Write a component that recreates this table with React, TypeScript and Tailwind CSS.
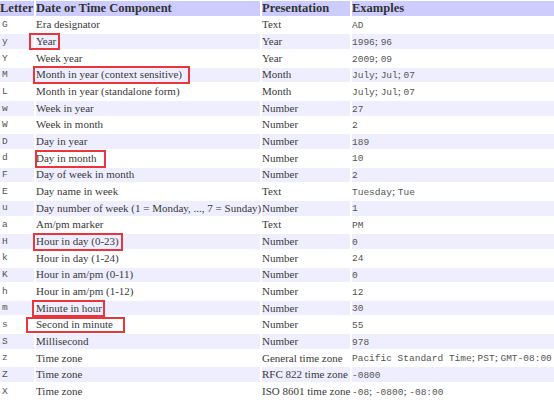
const rows: {
  letter: string;
  comp: string;
  pres: string;
  ex: string[];
  box?: string;
}[] = [
  { letter: "G", comp: "Era designator", pres: "Text", ex: ["AD"] },
  { letter: "y", comp: "Year", pres: "Year", ex: ["1996", "96"], box: "-left-[7px] -right-[4px] -top-[3px] -bottom-[3px]" },
  { letter: "Y", comp: "Week year", pres: "Year", ex: ["2009", "09"] },
  { letter: "M", comp: "Month in year (context sensitive)", pres: "Month", ex: ["July", "Jul", "07"], box: "-left-[3px] -right-[8px] -top-[3px] -bottom-[4px]" },
  { letter: "L", comp: "Month in year (standalone form)", pres: "Month", ex: ["July", "Jul", "07"] },
  { letter: "w", comp: "Week in year", pres: "Number", ex: ["27"] },
  { letter: "W", comp: "Week in month", pres: "Number", ex: ["2"] },
  { letter: "D", comp: "Day in year", pres: "Number", ex: ["189"] },
  { letter: "d", comp: "Day in month", pres: "Number", ex: ["10"], box: "-left-[1px] -right-[9px] -top-[3px] -bottom-[4px]" },
  { letter: "F", comp: "Day of week in month", pres: "Number", ex: ["2"] },
  { letter: "E", comp: "Day name in week", pres: "Text", ex: ["Tuesday", "Tue"] },
  { letter: "u", comp: "Day number of week (1 = Monday, ..., 7 = Sunday)", pres: "Number", ex: ["1"] },
  { letter: "a", comp: "Am/pm marker", pres: "Text", ex: ["PM"] },
  { letter: "H", comp: "Hour in day (0-23)", pres: "Number", ex: ["0"], box: "-left-[3px] -right-[4px] -top-[3px] -bottom-[4px]" },
  { letter: "k", comp: "Hour in day (1-24)", pres: "Number", ex: ["24"] },
  { letter: "K", comp: "Hour in am/pm (0-11)", pres: "Number", ex: ["0"] },
  { letter: "h", comp: "Hour in am/pm (1-12)", pres: "Number", ex: ["12"] },
  { letter: "m", comp: "Minute in hour", pres: "Number", ex: ["30"], box: "-left-[4px] -right-[3px] -top-[3px] -bottom-[3px]" },
  { letter: "s", comp: "Second in minute", pres: "Number", ex: ["55"], box: "-left-[10px] -right-[12px] -top-[2px] -bottom-[3px]" },
  { letter: "S", comp: "Millisecond", pres: "Number", ex: ["978"] },
  { letter: "z", comp: "Time zone", pres: "General time zone", ex: ["Pacific Standard Time", "PST", "GMT-08:00"] },
  { letter: "Z", comp: "Time zone", pres: "RFC 822 time zone", ex: ["-0800"] },
  { letter: "X", comp: "Time zone", pres: "ISO 8601 time zone", ex: ["-08", "-0800", "-08:00"] },
];

const mono = "font-['Liberation_Mono',monospace] text-[9.5px] text-[#555]";

export default function App() {
  return (
    <div className="w-[554px] h-[403px] overflow-hidden bg-white font-['Liberation_Serif',serif] text-[11px] text-[#3a3a3a]">
      <table className="table-fixed border-separate border-spacing-[2px] w-[580px] -ml-[2px] -mt-[1px]">
        <colgroup>
          <col className="w-[34px]" />
          <col className="w-[224px]" />
          <col className="w-[88px]" />
          <col className="w-[224px]" />
        </colgroup>
        <thead>
          <tr className="bg-[#ccccff] text-left text-[12.5px] font-bold text-[#333]">
            <th className="h-[14.67px] p-0 leading-none whitespace-nowrap">Letter</th>
            <th className="h-[14.67px] p-0 leading-none whitespace-nowrap">Date or Time Component</th>
            <th className="h-[14.67px] p-0 leading-none whitespace-nowrap">Presentation</th>
            <th className="h-[14.67px] p-0 leading-none whitespace-nowrap">Examples</th>
          </tr>
        </thead>
        <tbody>
          {rows.map((r, i) => (
            <tr key={r.letter} className={i % 2 === 1 ? "bg-[#eeeeff]" : "bg-white"}>
              <td className={`h-[14.67px] p-0 pl-[2px] leading-none ${mono}`}>{r.letter}</td>
              <td className="h-[14.67px] p-0 leading-none whitespace-nowrap">
                <span className="relative inline-block">
                  {r.comp}
                  {r.box && (
                    <span className={`absolute border-2 border-[#e8363c] ${r.box}`} />
                  )}
                </span>
              </td>
              <td className="h-[14.67px] p-0 leading-none whitespace-nowrap">{r.pres}</td>
              <td className="h-[14.67px] p-0 leading-none whitespace-nowrap">
                {r.ex.map((e, j) => (
                  <span key={j}>
                    {j > 0 && "; "}
                    <code className={mono}>{e}</code>
                  </span>
                ))}
              </td>
            </tr>
          ))}
        </tbody>
      </table>
    </div>
  );
}
